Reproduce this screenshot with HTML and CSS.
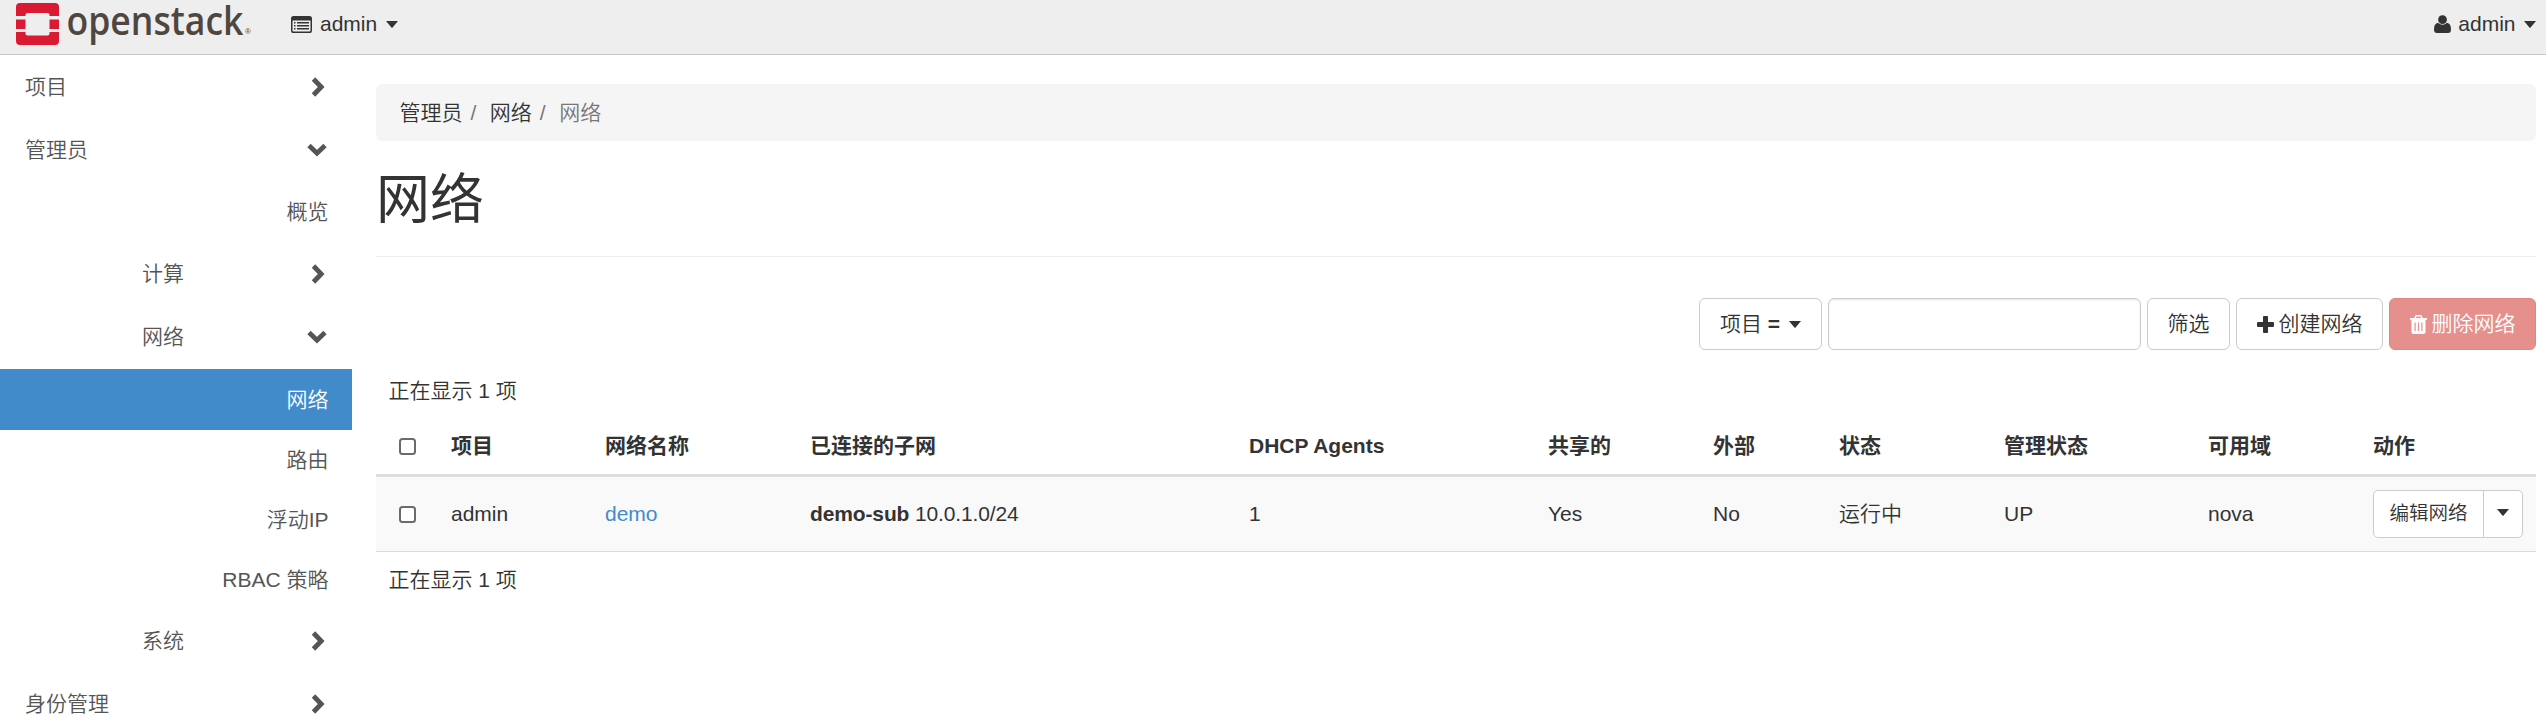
FILE: index.html
```html
<!DOCTYPE html>
<html lang="zh-CN">
<head>
<meta charset="utf-8">
<title>网络 - OpenStack Dashboard</title>
<link rel="stylesheet" href="styles.css">
</head>
<body>
<svg class="defs" width="0" height="0">
  <symbol id="right" viewBox="0 0 14 20"><path d="M2.500 2 10.200 10l-7.700 8" fill="none" stroke="currentColor" stroke-width="4.800"/></symbol>
  <symbol id="down" viewBox="0 0 20 14"><path d="M2 2.500 10 10.200l8-7.700" fill="none" stroke="currentColor" stroke-width="4.800"/></symbol>
  <symbol id="caret" viewBox="0 0 12 7"><path d="M0 0h12L6.600 6.500q-.6.5-1.200 0z" fill="currentColor"/></symbol>
</svg>
<header class="topbar">
  <svg class="logo" width="244" height="54" viewBox="0 0 244 54">
    <g fill="#da1a32">
      <path d="M20 3h35q4 0 4 4v9H49.500v-1q0-2-2-2h-20q-2 0-2 2v1H16V7q0-4 4-4z"/>
      <path d="M16 19.500h9.500V29H16zM49.500 19.500H59V29h-9.500z"/>
      <path d="M16 32h9.500v1.500q0 2 2 2h20q2 0 2-2V32H59v9q0 4-4 4H20q-4 0-4-4z"/>
    </g>
    <text class="wordmark" x="66.500" y="34.500" textLength="177" lengthAdjust="spacingAndGlyphs">openstack</text>
  </svg>
  <span class="reg">®</span>
  <a class="menu project">
    <svg width="21" height="17" viewBox="0 0 21 17"><rect x=".75" y=".75" width="19.500" height="15.500" rx="1.800" fill="none" stroke="currentColor" stroke-width="1.500"/><path d="M1 1h19v3.500H1z" fill="currentColor"/><path d="M3 6.700h1.500M3 9.700h1.500M3 12.700h1.500M6 6.700h12M6 9.700h12M6 12.700h12" stroke="currentColor" stroke-width="1.500"/></svg>
    <span>admin</span><svg class="caret"><use href="#caret"/></svg>
  </a>
  <a class="menu user">
    <svg width="17" height="18" viewBox="0 0 17 18"><circle cx="8.500" cy="4.700" r="4.400" fill="currentColor"/><path d="M4 7.700Q8.500 12 13 7.700q4 .8 4 6.800 0 3.500-3 3.500H3q-3 0-3-3.500 0-6 4-6.800z" fill="currentColor"/></svg>
    <span>admin</span><svg class="caret"><use href="#caret"/></svg>
  </a>
</header>
<div class="layout">
  <nav class="sidebar">
    <a class="group">项目<svg class="right"><use href="#right"/></svg></a>
    <a class="group">管理员<svg class="down"><use href="#down"/></svg></a>
    <a class="leaf overview">概览</a>
    <a class="group sub">计算<svg class="right"><use href="#right"/></svg></a>
    <a class="group sub open">网络<svg class="down"><use href="#down"/></svg></a>
    <a class="leaf active">网络</a>
    <a class="leaf">路由</a>
    <a class="leaf">浮动IP</a>
    <a class="leaf">RBAC 策略</a>
    <a class="group sub system">系统<svg class="right"><use href="#right"/></svg></a>
    <a class="group">身份管理<svg class="right"><use href="#right"/></svg></a>
  </nav>
  <main class="content">
    <ol class="breadcrumb"><li>管理员</li><li>网络</li><li class="current">网络</li></ol>
    <h1>网络</h1>
    <div class="toolbar">
      <button class="btn field"><span>项目 <b>=</b></span><svg class="caret"><use href="#caret"/></svg></button>
      <input class="search" type="text" aria-label="filter">
      <button class="btn filter">筛选</button>
      <button class="btn create"><svg width="17" height="17" viewBox="0 0 17 17"><path d="M6 1q0-1 1-1h3q1 0 1 1v5h5q1 0 1 1v3q0 1-1 1h-5v5q0 1-1 1H7q-1 0-1-1v-5H1q-1 0-1-1V7q0-1 1-1h5z" fill="currentColor"/></svg>创建网络</button>
      <button class="btn delete"><svg width="17" height="19" viewBox="0 0 17 19"><path d="M5 3 6 .8h5L12 3" fill="none" stroke="currentColor" stroke-width="1.500"/><path d="M0 3h17v1.800H0z" fill="currentColor"/><path fill-rule="evenodd" d="M1.500 4.500h14V17q0 2-2 2h-10q-2 0-2-2zM4.500 7.500V16h1.200V7.500zm3.400 0V16h1.200V7.500zm3.400 0V16h1.200V7.500z" fill="currentColor"/></svg>删除网络</button>
    </div>
    <div class="count">正在显示 1 项</div>
    <table>
      <colgroup><col class="w-check"><col class="w-project"><col class="w-name"><col class="w-subnet"><col class="w-dhcp"><col class="w-shared"><col class="w-external"><col class="w-status"><col class="w-admin"><col class="w-zone"><col class="w-action"></colgroup>
      <thead><tr><th><span class="box"></span></th><th>项目</th><th>网络名称</th><th>已连接的子网</th><th>DHCP Agents</th><th>共享的</th><th>外部</th><th>状态</th><th>管理状态</th><th>可用域</th><th>动作</th></tr></thead>
      <tbody><tr><td><span class="box"></span></td><td>admin</td><td><a class="link">demo</a></td><td class="subnet"><b>demo-sub</b> 10.0.1.0/24</td><td>1</td><td>Yes</td><td>No</td><td>运行中</td><td>UP</td><td>nova</td><td><div class="split"><button class="edit">编辑网络</button><button class="more"><svg class="caret"><use href="#caret"/></svg></button></div></td></tr></tbody>
    </table>
    <div class="count bottom">正在显示 1 项</div>
  </main>
</div>
</body>
</html>
```
FILE: styles.css
```css
* { box-sizing: border-box; }
body { margin: 0; height: 728px; overflow: hidden; background: #fff; color: #333; font: 350 21px/30px "Liberation Sans", "Noto Sans CJK SC", sans-serif; }
button { font: inherit; color: inherit; }
b { font-weight: 700; }
.defs { position: absolute; }
.caret { width: 12px; height: 7px; flex: none; }

.topbar { display: flex; align-items: flex-start; height: 55px; background: #eee; border-bottom: 1px solid #c8c8c8; }
.logo { flex: none; }
.wordmark { font: 600 40px "Open Sans", sans-serif; fill: #4f473f; }
.reg { width: 10px; margin: 27px 0 0 1px; font-size: 8px; line-height: 10px; color: #4f473f; }
.menu { display: flex; align-items: center; height: 48px; }
.project { margin-left: 36px; }
.project span { margin-left: 8px; }
.user { margin-left: auto; padding-right: 10px; }
.user span { margin-left: 7px; }
.menu .caret { margin-left: 8.500px; }

.layout { display: flex; }
.sidebar { flex: none; width: 352px; height: 673px; overflow: hidden; color: #555; }
.sidebar a { display: flex; align-items: center; }
.group { justify-content: space-between; height: 63px; padding: 0 25px; }
.group.sub { padding-left: 142px; }
.group.open { height: 64px; }
.group.system { height: 62px; }
.right { width: 14px; height: 20px; margin-right: 2px; }
.down { width: 20px; height: 14px; }
.leaf { justify-content: flex-end; height: 60px; padding-right: 23.500px; }
.leaf.overview, .leaf.active { height: 61px; }
.sidebar .leaf.active { background: #428bca; color: #fff; }

.content { flex: none; width: 2160px; margin: 29px 0 0 24px; }
.breadcrumb { display: flex; align-items: center; height: 57px; margin: 0; padding: 0 23.500px; list-style: none; background: #f5f5f5; border-radius: 6px; }
.breadcrumb li + li::before { content: "/"; padding: 0 13.500px 0 8px; color: #777; }
.breadcrumb .current { color: #777; }
h1 { height: 116px; margin: 0; padding-top: 29px; border-bottom: 1px solid #eee; font-size: 54px; font-weight: 400; line-height: 60px; }
.toolbar { display: flex; justify-content: flex-end; gap: 6px; margin-top: 41px; }
.btn { display: flex; align-items: center; justify-content: center; height: 52px; padding: 0; background: #fff; border: 1px solid #ccc; border-radius: 6px; }
.field { width: 123px; gap: 9px; }
.search { width: 313px; height: 52px; border: 1px solid #ccc; border-radius: 6px; box-shadow: inset 0 1px 2px rgba(0,0,0,.1); }
.filter { width: 83px; }
.create { width: 147px; gap: 5px; }
.delete { width: 147px; gap: 5px; background: #e6908e; border-color: #e28582; color: #fff; }
.count { height: 42px; margin-top: 26px; padding-left: 12.500px; }

table { width: 2160px; table-layout: fixed; border-collapse: separate; border-spacing: 0; }
th, td { padding: 0 12px; text-align: left; vertical-align: middle; }
th { height: 59px; border-bottom: 3px solid #ddd; font-weight: 700; }
td { height: 75px; background: #f9f9f9; border-bottom: 1px solid #ddd; }
.w-check { width: 63px; } .w-project { width: 154px; } .w-name { width: 205px; } .w-subnet { width: 439px; }
.w-dhcp { width: 299px; } .w-shared { width: 165px; } .w-external { width: 126px; } .w-status { width: 165px; }
.w-admin { width: 204px; } .w-zone { width: 165px; } .w-action { width: 175px; }
.subnet { letter-spacing: -.13px; }
.box { display: block; width: 17px; height: 17px; margin-left: 11px; border: 2px solid #6b6b6b; border-radius: 3.500px; background: #fff; }
.link { color: #428bca; }
.split { display: flex; width: 150px; height: 48px; border: 1px solid #ccc; border-radius: 5px; background: #fff; }
.edit { width: 110px; padding: 0 0 3px; border: 0; border-right: 1px solid #ccc; background: none; font-size: 19.500px; }
.more { display: flex; flex: 1; align-items: center; justify-content: center; padding: 0 0 3px; border: 0; background: none; }
.bottom { margin-top: 13px; }
```
